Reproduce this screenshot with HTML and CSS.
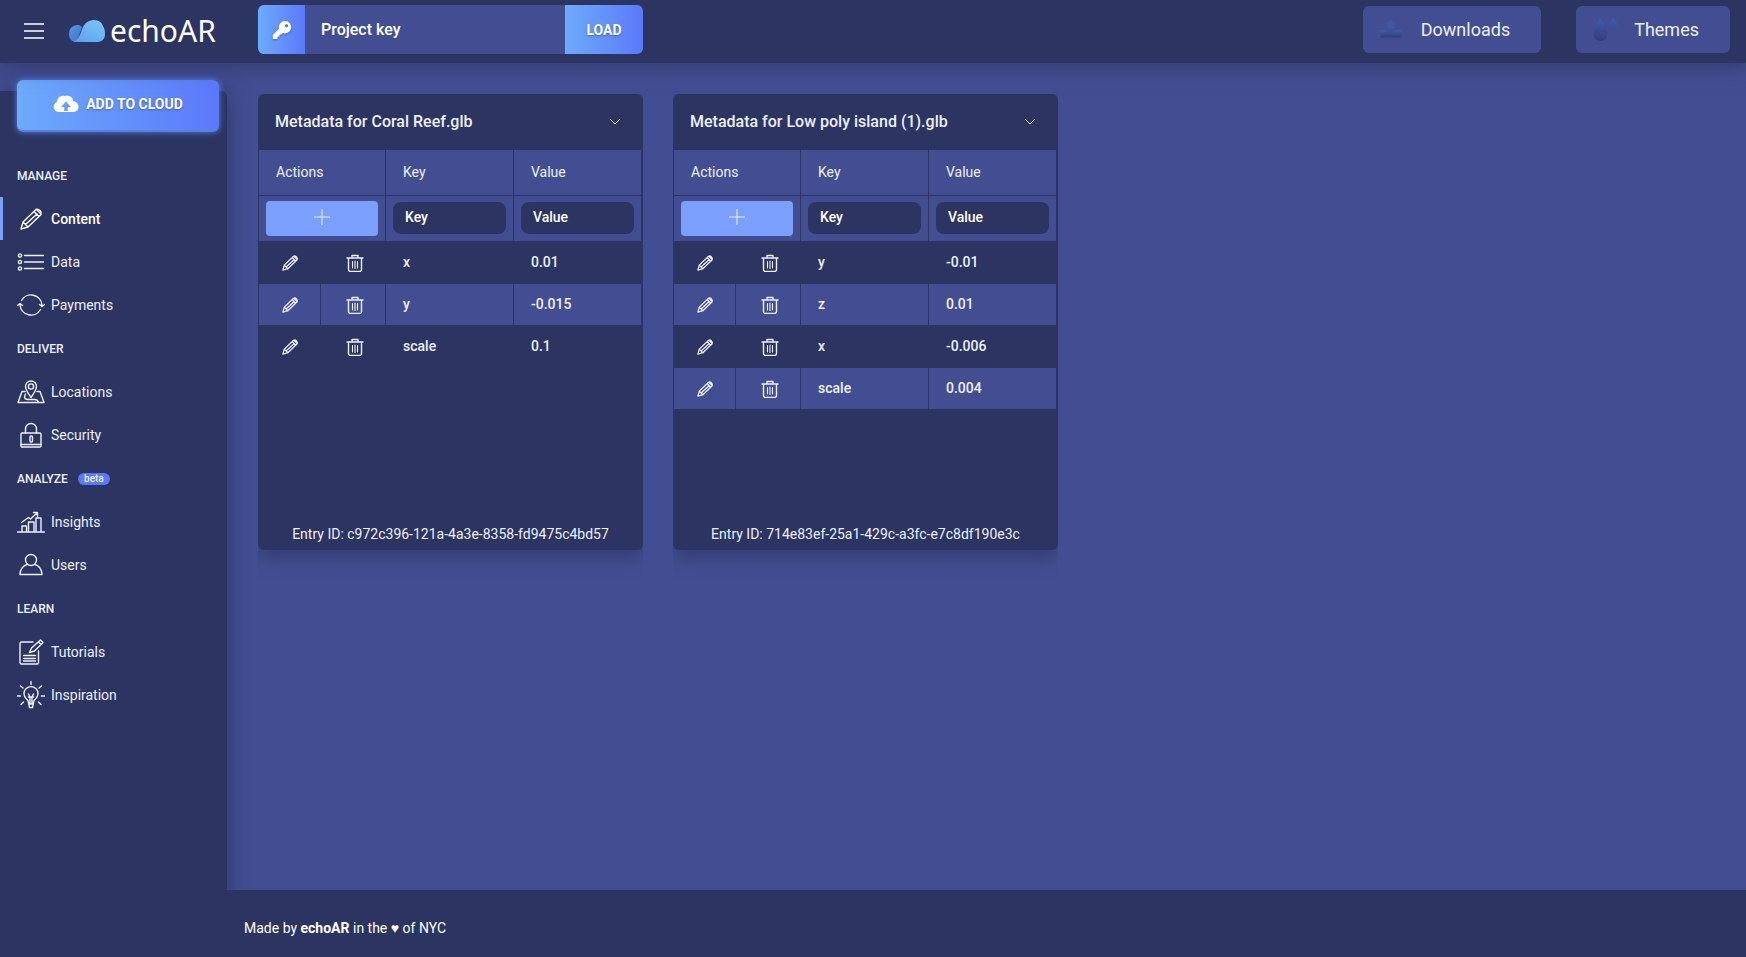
FILE: index.html
```html
<!DOCTYPE html>
<html lang="en">
<head>
<meta charset="utf-8">
<title>echoAR Console</title>
<link rel="stylesheet" href="styles.css">
</head>
<body>
<svg class="sprite" aria-hidden="true">
  <symbol id="i-pencil" viewBox="0 0 28 28"><path d="M4 24l2-7L19 4.500q2-1 4 1t1 4L11 22zM6 17l5 5M17 6.500l5 5M19.500 4.500l4.500 4.500M8.500 19.500L20 9"/></symbol>
  <symbol id="i-list" viewBox="0 0 28 28"><circle cx="3" cy="7.500" r="1.600"/><circle cx="3" cy="14" r="1.600"/><circle cx="3" cy="20.500" r="1.600"/><path d="M7.500 7.500h19M7.500 14h19M7.500 20.500h19"/></symbol>
  <symbol id="i-sync" viewBox="0 0 28 28"><path d="M4.500 9.500A11 11 0 0 1 25 14M23.500 18.500A11 11 0 0 1 3 14M22.500 13.500l2.500 2 2.500-2M.5 14.500l2.500-2 2.500 2"/></symbol>
  <symbol id="i-map" viewBox="0 0 28 28"><path d="M14 19.500C10.500 14.500 8.500 11.500 8.500 8.500a5.500 5.500 0 0 1 11 0c0 3-2 6-5.500 11zM8 13.500H5L1 24.500h26l-4-11h-3M8.500 16c-2 4-1 5.500 4 5.500h5q3 0 4 2.500"/><circle cx="14" cy="8.500" r="2.600"/></symbol>
  <symbol id="i-lock" viewBox="0 0 28 28"><rect x="4" y="12" width="20" height="14" rx="1"/><path d="M8.500 12V8a5.500 5.500 0 0 1 11 0v4M4 23.500h20"/><rect x="13" y="15" width="2.500" height="6" rx="1"/></symbol>
  <symbol id="i-chart" viewBox="0 0 28 28"><path d="M.5 24h27M5 24v-6h4.500v6M11.500 24V14H17v10M19 24V10h5v14M4.500 14.500l7-5 2 1.500L20 5M16.500 4.500h4v4"/></symbol>
  <symbol id="i-user" viewBox="0 0 28 28"><circle cx="14" cy="9" r="5.500"/><path d="M10 13.500Q3.500 15.500 3 23.500h22q-.5-8-7-10"/></symbol>
  <symbol id="i-note" viewBox="0 0 28 28"><path d="M16 4H4.500Q3 4 3 5.500v19Q3 26 4.500 26H20q1.500 0 1.500-1.500V13M6.500 17.500h12M6.500 20.500h12M6.500 23h12M12.500 14.500l2-4.500 9-8 2.500 2.500-8.500 8.500zM21.500 4l2.500 2.500"/></symbol>
  <symbol id="i-bulb" viewBox="0 0 28 28"><path d="M11.500 21.500q0-2-2-3.500a7 7 0 1 1 9 0q-2 1.500-2 3.500l-1 5h-3zM11.500 13l1.500 3v6M16.500 13L15 16v6M11.500 16h5M14 .5v3M0 15h3.500M24.500 15H28M3.500 5l2.500 2M24.500 5L22 7M4 23.500L6.500 21M24 23.500L21.500 21M11.500 23h5"/></symbol>
  <symbol id="i-trash" viewBox="0 0 18 18"><path d="M1 4h16M6 3.500V1.500h6v2M2.500 4v11.500q0 2 2 2h9q2 0 2-2V4"/><path stroke-width="1.100" d="M6.500 7.500v6.500M9 7v7.500M11.500 7.500v6.500"/></symbol>
  <symbol id="i-down" viewBox="0 0 10 6"><path d="M.5.5L5 5 9.500.5"/></symbol>
</svg>

<header class="topbar">
  <div class="brand-area">
    <button class="menu" type="button" aria-label="Toggle menu"><svg viewBox="0 0 20 16"><path d="M0 1h20M0 8h20M0 15h20"/></svg></button>
    <a class="brand" href="#">
      <svg viewBox="0 0 36 22" aria-hidden="true">
        <defs>
          <linearGradient id="g1" x2="1" y2="1"><stop offset="0" stop-color="#5599e2"/><stop offset="1" stop-color="#3f70c8"/></linearGradient>
          <linearGradient id="g2" x2="1" y1="1" y2="0"><stop offset="0" stop-color="#5b9df0"/><stop offset="1" stop-color="#7cc8f8"/></linearGradient>
        </defs>
        <path fill="url(#g1)" d="M13 7C11 5 9.500 5 8 5 3 5.500 0 9 0 14c0 5 3 7.500 6 8C10 20 10 14 13 7z"/>
        <path fill="url(#g2)" d="M4 21.300C11 20 11 13 13.500 8 16 2 21 0 25 0c5 0 8 3 9 6 1.500 2 2 5 2 8 0 5-3 8-8 8H8q-2 0-4-.7z"/>
      </svg>
      <span>echoAR</span>
    </a>
  </div>
  <form class="loader">
    <label class="key" for="pkey"><svg viewBox="0 0 20 20" aria-label="Key"><path fill-rule="evenodd" d="M13 1a6.200 6.200 0 1 1-2.200 12L9.500 14.500H7.500v2H5.500V19H.8v-4L7 8.800A6.200 6.200 0 0 1 13 1zm1.500 3.200a1.600 1.600 0 1 0 .1 0z"/></svg></label>
    <input id="pkey" type="text" placeholder="Project key">
    <button type="button">LOAD</button>
  </form>
  <div class="top-actions">
    <button type="button"><svg viewBox="0 0 28 28" aria-hidden="true"><defs><linearGradient id="g3" x2="0" y2="1"><stop offset="0" stop-color="#3e5eb0"/><stop offset="1" stop-color="#343d78"/></linearGradient></defs><circle cx="14" cy="9" r="4.500" fill="#3e5eb0" opacity=".5"/><path fill="url(#g3)" d="M3.500 14H9q1 3 5 3t5-3h6v7.500H3.500z"/></svg>Downloads</button>
    <button type="button"><svg viewBox="0 0 28 28" aria-hidden="true"><path fill="url(#g3)" d="M10.500 2q7 11 7 16a7 7 0 0 1-14 0q0-5 7-16zM23.500 1.500q4 5.500 4 7.500a4 4 0 0 1-8 0q0-2 4-7.500z"/></svg>Themes</button>
  </div>
</header>

<div class="shell">
  <aside class="sidebar">
    <button class="add" type="button"><svg viewBox="0 0 26 18" aria-hidden="true"><path fill-rule="evenodd" d="M5.500 17A5.200 5.200 0 0 1 4 7C4 3 8 0 12 1q2-1 4 0 4 1 4 5 5.500 1 5.500 6 0 4-4.500 5zM13 6.500L8 12h3.200v4h3.600v-4H18z"/></svg>ADD TO CLOUD</button>
    <nav>
      <h2>MANAGE</h2>
      <a class="active" href="#"><svg><use href="#i-pencil"/></svg>Content</a>
      <a href="#"><svg><use href="#i-list"/></svg>Data</a>
      <a href="#"><svg><use href="#i-sync"/></svg>Payments</a>
      <h2>DELIVER</h2>
      <a href="#"><svg><use href="#i-map"/></svg>Locations</a>
      <a href="#"><svg><use href="#i-lock"/></svg>Security</a>
      <h2>ANALYZE <span class="badge">beta</span></h2>
      <a href="#"><svg><use href="#i-chart"/></svg>Insights</a>
      <a href="#"><svg><use href="#i-user"/></svg>Users</a>
      <h2>LEARN</h2>
      <a href="#"><svg><use href="#i-note"/></svg>Tutorials</a>
      <a href="#"><svg><use href="#i-bulb"/></svg>Inspiration</a>
    </nav>
  </aside>
  <div class="page">
    <main class="cards">
      <section class="card">
        <header><h3>Metadata for Coral Reef.glb</h3><button type="button" aria-label="Collapse"><svg><use href="#i-down"/></svg></button></header>
        <table>
          <colgroup><col class="c-edit"><col class="c-del"><col><col></colgroup>
          <thead>
            <tr><th colspan="2">Actions</th><th>Key</th><th>Value</th></tr>
            <tr class="new"><td colspan="2"><button class="plus" type="button" aria-label="Add entry"><svg viewBox="0 0 16 16"><path d="M8 0v16M0 8h16"/></svg></button></td><td><input type="text" placeholder="Key" aria-label="Key"></td><td><input type="text" placeholder="Value" aria-label="Value"></td></tr>
          </thead>
          <tbody>
            <tr><td><button type="button" aria-label="Edit"><svg><use href="#i-pencil"/></svg></button></td><td><button type="button" aria-label="Delete"><svg><use href="#i-trash"/></svg></button></td><td>x</td><td>0.01</td></tr>
            <tr><td><button type="button" aria-label="Edit"><svg><use href="#i-pencil"/></svg></button></td><td><button type="button" aria-label="Delete"><svg><use href="#i-trash"/></svg></button></td><td>y</td><td>-0.015</td></tr>
            <tr><td><button type="button" aria-label="Edit"><svg><use href="#i-pencil"/></svg></button></td><td><button type="button" aria-label="Delete"><svg><use href="#i-trash"/></svg></button></td><td>scale</td><td>0.1</td></tr>
          </tbody>
        </table>
        <p>Entry ID: c972c396-121a-4a3e-8358-fd9475c4bd57</p>
      </section>
      <section class="card">
        <header><h3>Metadata for Low poly island (1).glb</h3><button type="button" aria-label="Collapse"><svg><use href="#i-down"/></svg></button></header>
        <table>
          <colgroup><col class="c-edit"><col class="c-del"><col><col></colgroup>
          <thead>
            <tr><th colspan="2">Actions</th><th>Key</th><th>Value</th></tr>
            <tr class="new"><td colspan="2"><button class="plus" type="button" aria-label="Add entry"><svg viewBox="0 0 16 16"><path d="M8 0v16M0 8h16"/></svg></button></td><td><input type="text" placeholder="Key" aria-label="Key"></td><td><input type="text" placeholder="Value" aria-label="Value"></td></tr>
          </thead>
          <tbody>
            <tr><td><button type="button" aria-label="Edit"><svg><use href="#i-pencil"/></svg></button></td><td><button type="button" aria-label="Delete"><svg><use href="#i-trash"/></svg></button></td><td>y</td><td>-0.01</td></tr>
            <tr><td><button type="button" aria-label="Edit"><svg><use href="#i-pencil"/></svg></button></td><td><button type="button" aria-label="Delete"><svg><use href="#i-trash"/></svg></button></td><td>z</td><td>0.01</td></tr>
            <tr><td><button type="button" aria-label="Edit"><svg><use href="#i-pencil"/></svg></button></td><td><button type="button" aria-label="Delete"><svg><use href="#i-trash"/></svg></button></td><td>x</td><td>-0.006</td></tr>
            <tr><td><button type="button" aria-label="Edit"><svg><use href="#i-pencil"/></svg></button></td><td><button type="button" aria-label="Delete"><svg><use href="#i-trash"/></svg></button></td><td>scale</td><td>0.004</td></tr>
          </tbody>
        </table>
        <p>Entry ID: 714e83ef-25a1-429c-a3fc-e7c8df190e3c</p>
      </section>
    </main>
    <footer class="foot"><span>Made by <b>echoAR</b> in the ♥ of NYC</span></footer>
  </div>
</div>
</body>
</html>
```
FILE: styles.css
```css
:root {
  --dark: #2c3461;
  --mid: #434e92;
  --text: #edf0ff;
  --accent: #7a9ffc;
  --grad: linear-gradient(90deg, #6dabfb, #5b79fb);
}

* { box-sizing: border-box; }

body {
  margin: 0;
  min-height: 100vh;
  display: flex;
  flex-direction: column;
  background: var(--mid);
  color: var(--text);
  font: 14px/20px Roboto, "Open Sans", sans-serif;
}

button, input { font: inherit; color: inherit; border: 0; padding: 0; background: none; }
input { min-width: 0; }
input::placeholder { color: #fff; opacity: 1; }
a { color: inherit; text-decoration: none; }
svg { display: block; flex: none; fill: none; stroke: currentColor; stroke-width: 1.4; stroke-linejoin: round; stroke-linecap: round; }
.sprite { display: none; }

/* Top bar */
.topbar {
  position: relative;
  z-index: 2;
  display: flex;
  align-items: center;
  height: 63px;
  padding: 0 16px 4px 24px;
  background: var(--dark);
  box-shadow: 0 2px 20px rgba(38, 45, 84, .7);
}
.brand-area { display: flex; align-items: center; gap: 25px; width: 234px; padding-top: 3px; }
.menu svg { width: 20px; height: 16px; stroke: #fff; stroke-width: 1.4; }
.brand { display: flex; align-items: center; gap: 5px; color: #fff; font: 30px/32px "Noto Sans", sans-serif; }
.brand svg { width: 36px; height: 22px; stroke: none; }

.loader { display: flex; width: 385px; height: 49px; border-radius: 6px; overflow: hidden; background: var(--mid); font-weight: 500; }
.key { display: flex; align-items: center; justify-content: center; width: 47px; background: var(--grad); }
.key svg { width: 20px; height: 20px; fill: #fff; stroke: none; filter: drop-shadow(0 1px 1px rgba(40, 50, 110, .5)); }
.loader input { flex: 1; padding: 0 16px; font-size: 16px; }
.loader button { width: 78px; background: var(--grad); color: #fff; font-weight: 700; text-shadow: 0 1px 2px rgba(40, 50, 110, .5); }

.top-actions { display: flex; gap: 35px; margin-left: auto; }
.top-actions button { display: flex; align-items: center; gap: 16px; height: 47px; padding: 0 31px 0 14px; border-radius: 6px; background: var(--mid); font-size: 18px; }
.top-actions svg { width: 28px; height: 28px; stroke: none; }

/* Sidebar */
.shell { flex: 1; display: flex; }
.sidebar {
  position: relative;
  z-index: 1;
  width: 227px;
  margin-top: 28px;
  background: var(--dark);
  border-radius: 0 6px 0 0;
  box-shadow: 2px 0 20px rgba(38, 45, 84, .6);
}
.add {
  display: flex;
  align-items: center;
  justify-content: center;
  gap: 7px;
  width: 202px;
  height: 52px;
  margin: -11px 0 0 17px;
  padding-bottom: 3px;
  border-bottom: 2px solid #5580dc;
  border-radius: 6px;
  background: var(--grad);
  box-shadow: 0 0 6px rgba(95, 140, 250, .9);
  color: #fff;
  font-weight: 700;
  text-shadow: 0 1px 2px rgba(40, 50, 110, .5);
}
.add svg { width: 26px; height: 18px; fill: #fff; stroke: none; }
nav { padding-top: 21px; }
nav h2 { display: flex; align-items: center; gap: 10px; height: 44px; margin: 0; padding: 2px 0 0 17px; font-size: 12px; font-weight: 500; }
.badge { width: 32px; border-radius: 6px; background: #5b79fb; font-size: 10px; line-height: 12px; text-align: center; }
nav a { display: flex; align-items: center; gap: 6px; height: 43px; padding-left: 14px; border-left: 3px solid transparent; }
nav a svg { width: 28px; height: 28px; }
nav .active { color: #fff; font-weight: 500; border-image: linear-gradient(var(--accent), var(--accent)) 1; }

/* Metadata cards */
.page { flex: 1; min-width: 0; display: flex; flex-direction: column; }
.cards { flex: 1; display: flex; flex-wrap: wrap; align-items: flex-start; gap: 30px; padding: 31px; }
.card {
  display: flex;
  flex-direction: column;
  width: 385px;
  min-height: 456px;
  padding: 0 1px 6px;
  border-radius: 6px;
  background: var(--dark);
  box-shadow: 0 6px 20px rgba(38, 45, 84, .6);
  clip-path: inset(0 0 -40px 0);
}
.card header { display: flex; align-items: center; justify-content: space-between; height: 56px; padding: 0 22px 0 16px; }
.card h3 { margin: 0; font-size: 16px; font-weight: 500; }
.card header svg { width: 10px; height: 6px; stroke-width: 1; }
.card p { margin: auto 0 0; text-align: center; }

table { width: 100%; table-layout: fixed; border-spacing: 0; }
.c-edit { width: 62px; }
.c-del { width: 65px; }
th, td { height: 42px; padding: 0 0 2px 17px; border: solid var(--dark); border-width: 0 1px 1px 0; text-align: left; font-weight: 500; }
th { height: 46px; font-weight: 400; }
thead tr, tbody tr:nth-child(even) { background: var(--mid); }
.new td { height: 46px; padding: 0 7px 1px; }
.new input { display: block; width: 100%; height: 32px; padding: 0 12px 2px; border-radius: 8px; background: var(--dark); }
.plus { display: flex; align-items: center; justify-content: center; width: 100%; height: 35px; padding-bottom: 2px; border-radius: 4px; background: var(--accent); }
.plus svg { width: 16px; height: 16px; stroke-width: 1; }
tbody td:nth-child(-n+2) { padding: 0; }
tbody td:nth-child(2) { padding-left: 3px; }
tbody button { display: block; margin: 0 auto; }
tbody button svg { width: 20px; height: 20px; stroke-width: 1.8; }
tbody td:nth-child(2) svg { width: 18px; height: 18px; stroke-width: 1.4; }

/* Footer */
.foot { display: flex; align-items: center; height: 67px; padding: 8px 17px 0; background: var(--dark); color: #fff; position: relative; z-index: 1; }
.foot b { font-weight: 700; }
```
